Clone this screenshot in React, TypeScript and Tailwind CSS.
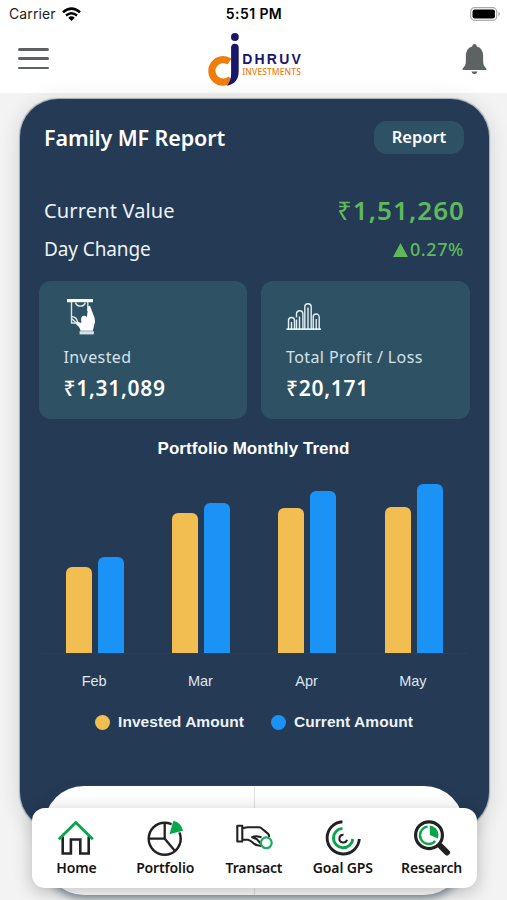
import type { ReactNode } from "react";

const trend = [
  { month: "Feb", invested: 86.5, current: 96 },
  { month: "Mar", invested: 140, current: 150 },
  { month: "Apr", invested: 145, current: 162 },
  { month: "May", invested: 146.5, current: 169.5 },
];

function StatusBar() {
  return (
    <div className="grid h-[27px] grid-cols-3 items-center pl-[9px] pr-[6px] font-['Inter','Liberation_Sans',sans-serif] text-black">
      <div className="flex items-center gap-[6px]">
        <span className="text-[14px] tracking-[0.1px] text-[#222]">Carrier</span>
        <svg width="19" height="14" viewBox="0 0 19 14" fill="none" stroke="#000" strokeWidth="2.5">
          <path d="M1 5.2Q9.5-2 18 5.2" />
          <path d="M4 8.5Q9.5 4 15 8.5" />
          <path d="M9.5 14 6.2 10.7Q9.5 8 12.8 10.7Z" fill="#000" stroke="none" />
        </svg>
      </div>
      <span className="justify-self-center whitespace-nowrap pr-[2px] text-[14px] font-semibold tracking-[0.4px]">5:51 PM</span>
      <svg className="justify-self-end" width="31" height="14" viewBox="0 0 31 14">
        <rect x="0.7" y="0.7" width="26" height="12.6" rx="3.8" fill="#fff" stroke="#aaa" strokeWidth="1.2" />
        <rect x="2.5" y="2.5" width="22.4" height="9" rx="2.2" fill="#000" />
        <path d="M28.4 5Q30 5.5 30 7T28.4 9Z" fill="#aaa" />
      </svg>
    </div>
  );
}

function Logo() {
  return (
    <div className="flex h-[54px] w-[95px] items-start">
      <svg className="shrink-0" width="33" height="54" viewBox="0 0 33 54" fill="none">
        <path d="M22.5 28.5A11.3 11.3 0 1 0 24 46" stroke="#ef7d0b" strokeWidth="7.2" />
        <path d="M24.1 14.5a3.8 3.8 0 0 1 7.6 0V38Q31.7 50.5 19.8 52.8 24.1 48 24.1 41Z" fill="#19176b" />
        <circle cx="27.9" cy="4" r="3.9" fill="#19176b" />
      </svg>
      <div className="ml-[2.5px] pt-[19px] font-['Liberation_Sans',sans-serif] leading-none">
        <div className="text-[14px] font-bold leading-[14px] tracking-[2.2px] text-[#19176b]">DHRUV</div>
        <div className="mt-[1px] font-['Noto_Sans',sans-serif] text-[8.5px] font-medium leading-[10px] tracking-[0.1px] text-[#ef7d0b]">INVESTMENTS</div>
      </div>
    </div>
  );
}

function Header() {
  return (
    <header className="h-[93px] bg-white">
      <StatusBar />
      <div className="flex h-[66px] items-start justify-between pl-[18px] pr-[20.5px] pt-[6px]">
        <div className="mt-[15px] flex w-[31px] flex-col gap-[6.6px]">
          <div className="h-[2.7px] rounded bg-[#5d6263]" />
          <div className="h-[2.7px] rounded bg-[#5d6263]" />
          <div className="h-[2.7px] rounded bg-[#5d6263]" />
        </div>
        <div className="mr-[2px]">
          <Logo />
        </div>
        <svg className="mt-[11px]" width="25" height="30" viewBox="0 0 26 30" preserveAspectRatio="none" fill="#5d6263">
          <path d="M13 0C11.5 0 10.7 1 10.7 2.4 6 3.5 4 7.5 4 12v5.5C4 21 2.7 22.4.7 24.5V26h24.6v-1.5C23.3 22.4 22 21 22 17.5V12C22 7.5 20 3.5 15.3 2.4 15.3 1 14.5 0 13 0ZM9.8 27.4h6.4Q15.4 30 13 30T9.8 27.4Z" />
        </svg>
      </div>
    </header>
  );
}

function Tile({ icon, label, value }: { icon: ReactNode; label: string; value: ReactNode }) {
  return (
    <div className="h-[138px] flex-1 rounded-[12px] bg-[#2e5264] pl-[25px] pt-[17px]">
      <div className="h-[38px]">{icon}</div>
      <div className="mt-[9px] text-[16px] leading-[24px] tracking-[0.4px] text-[#d5e1ea]">{label}</div>
      <div className="mt-[5px] text-[21px] font-semibold leading-[28px] tracking-[0.7px] text-white">{value}</div>
    </div>
  );
}

function CashIcon() {
  return (
    <svg className="ml-[3px]" width="30" height="38" viewBox="0 0 30 38" fill="none">
      <rect x="0" y="1" width="26" height="3.2" fill="#fff" />
      <path d="M4.5 4v21H12M20.8 4v9M8.5 4.5a5 4.5 0 0 0 9.8 0M4.5 18.5q6 .5 6 6.5M4.5 20.5l5 4.5" stroke="#d8e4ea" strokeWidth="1.4" />
      <path d="M22.3 7.8q1 0 1.5 2.2l3.8 10q1.1 4-.6 8l-1.2 4.7H13.5c-.4-3-2.3-4.8-4.1-6.3-1.8-1.6-.2-3.2 2.2-2.4l2.6 1c.6-2-.9-4 .5-6 1.3-1.6 3.7-1.7 5.2.2l1.1-9.4q.2-2 1.3-2Z" fill="#fff" />
      <path d="M12.6 33.2h14.2v3.2H12.6z" fill="#d8e4ea" />
    </svg>
  );
}

function BarsIcon() {
  return (
    <svg width="36" height="38" viewBox="0 0 36 38" fill="none" stroke="#e4eef4">
      <path d="M.5 31.2h34.5" strokeWidth="1.8" />
      <path
        d="M2.5 31V22.5a3 3 0 0 1 6 0V31M10.5 19.5V16a3.2 3.2 0 0 1 6.4 0V31M13.5 18.5V31M10.5 21.5V31M18.8 31V9a3.2 3.2 0 0 1 6.4 0V31M27.2 31V19a3 3 0 0 1 6 0V31M5.5 24v7M22 9.5V31M30.2 21V31"
        strokeWidth="1.4"
      />
    </svg>
  );
}

function TrendChart() {
  return (
    <section className="font-['Liberation_Sans',sans-serif]">
      <h2 className="pr-[1px] pt-[19px] text-center text-[17px] font-bold leading-[22px] tracking-[0.05px] text-white">
        Portfolio Monthly Trend
      </h2>
      <div className="ml-[22px] mr-[21.5px] mt-[16px] flex h-[178px] border-b border-[#373c4c]">
        {trend.map((t) => (
          <div key={t.month} className="flex flex-1 items-end justify-center gap-[6px]">
            <div className="w-[26px] rounded-t-[6px] bg-[#f3be51]" style={{ height: t.invested }} />
            <div className="w-[26px] rounded-t-[6px] bg-[#1b92f5]" style={{ height: t.current }} />
          </div>
        ))}
      </div>
      <div className="ml-[21.5px] mr-[22.5px] mt-[17px] flex">
        {trend.map((t) => (
          <div key={t.month} className="flex-1 text-center text-[14.5px] leading-[20px] text-[#dfe6ee]">
            {t.month}
          </div>
        ))}
      </div>
      <div className="mt-[21px] flex items-center justify-center gap-[27px] text-[15.5px] font-bold leading-[20px] tracking-[0.05px] text-[#edf2f7]">
        <div className="flex items-center gap-[8px]">
          <i className="size-[15px] rounded-full bg-[#f3be51]" />
          Invested Amount
        </div>
        <div className="flex items-center gap-[8px]">
          <i className="size-[15px] rounded-full bg-[#1b92f5]" />
          Current Amount
        </div>
      </div>
    </section>
  );
}

function HomeIcon() {
  return (
    <svg width="38" height="38" viewBox="0 0 38 38" fill="none">
      <path d="M5.7 17.5V34.5h8.2V20.5h9.4v14h8.4v-17" stroke="#222" strokeWidth="2.6" />
      <path d="M1.8 20.3 18.8 3.5l17 16.8" stroke="#08a64b" strokeWidth="2.8" />
    </svg>
  );
}

function PieIcon() {
  return (
    <svg width="38" height="38" viewBox="0 0 38 38" fill="none">
      <circle cx="18.7" cy="19.7" r="16" stroke="#222" strokeWidth="2.5" />
      <path d="M18.7 4v15.7M2.7 19.7h16L29 32" stroke="#222" strokeWidth="2.3" />
      <path d="M22.8 15.8 27.2 1.2Q35.8 3.5 37.5 12Z" fill="#08a64b" stroke="#fff" strokeWidth="0.8" />
    </svg>
  );
}

function HandIcon() {
  return (
    <svg width="38" height="38" viewBox="0 0 38 38" fill="none" stroke="#222" strokeWidth="2.1" strokeLinejoin="round">
      <path d="M2.3 6.8h5v15.7h-5z" />
      <path d="M7.3 9.2 12.5 8.3H24q1.6.2 3 1.4l6.2 5.2q1 1 1 3M7.3 20.8h5.5c4.5.6 5 4.7 9.7 5.5l4 .7" />
      <path d="M26.5 18.3l-2.3-.6q-3.6-1-7 .6l4.6 1.8 4.2 4.7" />
      <circle cx="31.3" cy="23.8" r="5.4" stroke="#18ad61" strokeWidth="2.2" fill="#fff" />
    </svg>
  );
}

function GoalIcon() {
  return (
    <svg width="38" height="38" viewBox="0 0 38 38" fill="none">
      <path d="M18.5 2.8A16.1 16.1 0 1 0 35.3 20" stroke="#222" strokeWidth="2.9" />
      <path d="M18.5 9.4A9.7 9.7 0 1 0 28.8 20" stroke="#08a64b" strokeWidth="2.9" />
      <path d="M19.5 15.7A3.9 3.9 0 1 0 23 20.7" stroke="#222" strokeWidth="2" />
    </svg>
  );
}

function ResearchIcon() {
  return (
    <svg width="38" height="38" viewBox="0 0 38 38" fill="none">
      <path d="m28 27.5 6 6" stroke="#222" strokeWidth="6" strokeLinecap="round" />
      <path d="m23 23 8 8" stroke="#222" strokeWidth="2.8" />
      <circle cx="16" cy="16.2" r="13.4" stroke="#222" strokeWidth="3.2" fill="#fff" />
      <path d="M14.6 7.6A8.7 8.7 0 1 0 22.2 22" stroke="#08a64b" strokeWidth="2.4" />
      <path d="M16.8 6.6A9.5 9.5 0 0 1 24.8 19.5L16.8 16Z" fill="#08a64b" />
    </svg>
  );
}

function NavItem({ icon, label }: { icon: ReactNode; label: ReactNode }) {
  return (
    <div className="flex flex-1 flex-col items-center pt-[10.5px]">
      {icon}
      <span className="mt-[1.5px] whitespace-nowrap text-[14px] font-semibold leading-[20px] tracking-[-0.15px] text-[#151515]">{label}</span>
    </div>
  );
}

export default function App() {
  return (
    <div className="relative h-[900px] w-[507px] overflow-hidden bg-[#f3f3f4] font-['Noto_Sans',sans-serif]">
      <Header />
      <main className="pt-[6px]">
        <div className="ml-[19.5px] h-[731px] w-[469px] rounded-[38px] bg-[#243a55] shadow-[0_3px_22px_rgba(0,0,0,0.14),0_0_1px_0.5px_rgba(70,90,110,0.4)]">
          <div className="flex items-center justify-between pl-[24.5px] pr-[24.5px] pt-[22px]">
            <h1 className="text-[21.5px] font-semibold leading-[33px] tracking-[-0.1px] text-white">Family MF Report</h1>
            <button className="h-[33px] w-[90px] rounded-[13px] bg-[#2e5264] text-[16.5px] font-semibold text-white">Report</button>
          </div>
          <div className="mt-[37px] flex h-[39px] items-center justify-between pl-[24.5px] pr-[24.5px]">
            <span className="text-[20px] tracking-[0.15px] text-[#edf2f7]">Current Value</span>
            <span className="-mr-px text-[26px] font-semibold tracking-[1.05px] text-[#5fb95b]">
              <span className="font-normal">₹</span>1,51,260
            </span>
          </div>
          <div className="flex h-[39px] items-center justify-between pl-[24.5px] pr-[24.5px]">
            <span className="text-[19px] tracking-[-0.1px] text-[#edf2f7]">Day Change</span>
            <span className="flex items-center gap-[2px] text-[18px] font-medium tracking-[0.6px] text-[#5fb95b]">
              <svg width="15" height="14" viewBox="0 0 15 14">
                <path d="M7.5 0 15 14H0Z" fill="currentColor" />
              </svg>
              0.27%
            </span>
          </div>
          <div className="mx-[19px] mt-[12px] flex gap-[14px]">
            <Tile icon={<CashIcon />} label="Invested" value={<><span className="font-medium">₹</span>1,31,089</>} />
            <Tile icon={<BarsIcon />} label="Total Profit / Loss" value={<><span className="font-medium">₹</span>20,171</>} />
          </div>
          <TrendChart />
        </div>
        <div className="relative -mt-[44px] ml-[44px] flex h-[109px] w-[420px] rounded-[40px] bg-white shadow-[0_4px_8px_rgba(50,80,95,0.6)]">
          <div className="flex-1 border-r border-[#dfe2e4]" />
          <div className="flex-1" />
        </div>
      </main>
      <nav className="absolute bottom-[12px] left-[32px] flex h-[80px] w-[445px] rounded-[13px] bg-white pr-[1px] shadow-[0_4px_18px_rgba(0,0,0,0.25)]">
        <NavItem icon={<HomeIcon />} label="Home" />
        <NavItem icon={<PieIcon />} label="Portfolio" />
        <NavItem icon={<HandIcon />} label="Transact" />
        <NavItem icon={<GoalIcon />} label="Goal GPS" />
        <NavItem icon={<ResearchIcon />} label="Research" />
      </nav>
    </div>
  );
}
